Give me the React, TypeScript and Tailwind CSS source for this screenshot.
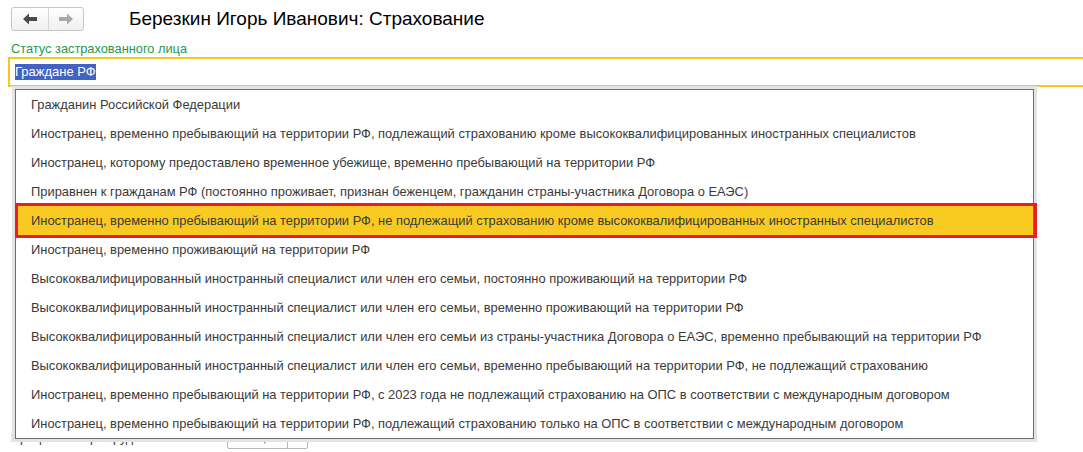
import React from "react";

const options = [
  "Гражданин Российской Федерации",
  "Иностранец, временно пребывающий на территории РФ, подлежащий страхованию кроме высококвалифицированных иностранных специалистов",
  "Иностранец, которому предоставлено временное убежище, временно пребывающий на территории РФ",
  "Приравнен к гражданам РФ (постоянно проживает, признан беженцем, гражданин страны-участника Договора о ЕАЭС)",
  "Иностранец, временно пребывающий на территории РФ, не подлежащий страхованию кроме высококвалифицированных иностранных специалистов",
  "Иностранец, временно проживающий на территории РФ",
  "Высококвалифицированный иностранный специалист или член его семьи, постоянно проживающий на территории РФ",
  "Высококвалифицированный иностранный специалист или член его семьи, временно проживающий на территории РФ",
  "Высококвалифицированный иностранный специалист или член его семьи из страны-участника Договора о ЕАЭС, временно пребывающий на территории РФ",
  "Высококвалифицированный иностранный специалист или член его семьи, временно пребывающий на территории РФ, не подлежащий страхованию",
  "Иностранец, временно пребывающий на территории РФ, с 2023 года не подлежащий страхованию на ОПС в соответствии с международным договором",
  "Иностранец, временно пребывающий на территории РФ, подлежащий страхованию только на ОПС в соответствии с международным договором",
];

const selected = 4;

function Arrow({ dir, color }: { dir: "left" | "right"; color: string }) {
  return (
    <svg width="14" height="12" viewBox="0 0 14 12" className={dir === "right" ? "rotate-180" : ""}>
      <path d="M0 6 L6 0.5 L6 4 L14 4 L14 8 L6 8 L6 11.5 Z" fill={color} />
    </svg>
  );
}

export default function App() {
  return (
    <div
      className="relative w-[1083px] h-[452px] overflow-hidden bg-white"
      style={{ fontFamily: '"Liberation Sans", Arial, sans-serif' }}
    >
      {/* header */}
      <div className="flex items-center pt-[7px] pl-[11px]">
        <div className="flex h-[24px] w-[73px] rounded-[3px] border border-[#c6c6c6] bg-gradient-to-b from-white to-[#f0f0f0]">
          <div className="flex w-[37px] items-center justify-center border-r border-[#d6d6d6]">
            <Arrow dir="left" color="#4a4a4a" />
          </div>
          <div className="flex flex-1 items-center justify-center">
            <Arrow dir="right" color="#a8a8a8" />
          </div>
        </div>
        <div className="ml-[45px] text-[19px] leading-[22px] text-black">
          Березкин Игорь Иванович: Страхование
        </div>
      </div>

      {/* label */}
      <div className="mt-[11px] pl-[11px] text-[12.8px] leading-[14px] text-[#1f9a4e]">
        Статус застрахованного лица
      </div>

      {/* input */}
      <div className="ml-[8px] mt-[1px] -mr-[4px] flex h-[30px] items-center border-2 border-[#f7c91f] pl-[5px]">
        <span className="bg-[#4263c4] text-[13px] leading-[16px] text-white">Граждане РФ</span>
      </div>

      {/* form row hidden behind the popup */}
      <div className="mt-[340px] flex items-center pl-[11px]">
        <span className="text-[12.5px] leading-[16px] text-[#333]">Процент потери трудоспособности:</span>
        <div className="ml-[10px] flex h-[22px] w-[81px] rounded-[2px] border border-[#b8b8b8]">
          <div className="flex-1 pr-[6px] text-right text-[13px] leading-[20px] text-[#333]">0,00</div>
          <div className="flex w-[20px] items-center justify-center border-l border-[#b8b8b8] text-[12px] text-[#555]">
            —
          </div>
        </div>
      </div>

      {/* dropdown popup */}
      <div className="absolute left-[12px] top-[86px] w-[1025px] bg-[#e3e3e3] p-[3px]">
        <div className="border border-[#6e6e6e] bg-white">
          {options.map((o, i) => (
            <div
              key={i}
              className={
                "relative flex h-[29px] items-center pl-[15px] text-[12.9px] text-[#3a3a3a] whitespace-nowrap " +
                (i === selected ? "bg-[#f8ca22]" : "")
              }
            >
              {o}
              {i === selected && (
                <span className="absolute -left-[1px] -right-[4px] -top-[3px] -bottom-[3px] border-[3px] border-[#ea1d25]" />
              )}
            </div>
          ))}
        </div>
      </div>
    </div>
  );
}
